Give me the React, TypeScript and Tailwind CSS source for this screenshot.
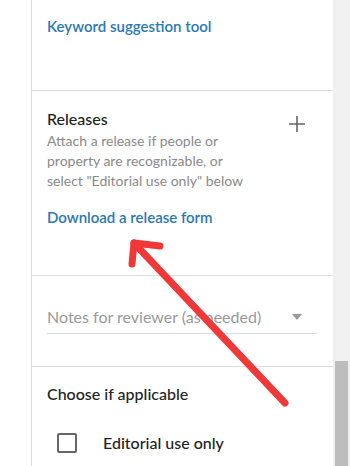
import { useState } from "react";

const App = () => {
    const [editorial, setEditorial] = useState(false);

    return (
        <div className="flex w-[350px] h-[466px] overflow-hidden bg-white font-['Lato','Liberation_Sans',sans-serif] relative">
            <div className="w-[31px] shrink-0 bg-white" />
            <div className="flex-1 border-l border-[#dcdcdc] flex flex-col">
                {/* keyword section */}
                <div className="h-[91px] shrink-0 border-b border-[#dedede] pl-[15px] pt-[14px]">
                    <a className="text-[15px] leading-[22px] font-semibold text-[#2a78b5] cursor-pointer">
                        Keyword suggestion tool
                    </a>
                </div>

                {/* releases */}
                <div className="h-[185px] shrink-0 border-b border-[#dedede] pl-[15px] pr-[27px] pt-[17px]">
                    <div className="flex justify-between items-start">
                        <div>
                            <h3 className="text-[16px] leading-[22px] font-medium text-[#222]">Releases</h3>
                            <p className="text-[14px] leading-[20px] text-[#8a8a8a] mt-[1px] w-[205px]">
                                Attach a release if people or property are recognizable, or select "Editorial use only" below
                            </p>
                        </div>
                        <svg width="16" height="16" viewBox="0 0 16 16" className="mt-[8px] mr-[1px]">
                            <path d="M8 0v16M0 8h16" stroke="#666" strokeWidth="1.6" />
                        </svg>
                    </div>
                    <a className="block mt-[15px] text-[15px] leading-[22px] font-semibold text-[#2a78b5] cursor-pointer">
                        Download a release form
                    </a>
                </div>

                {/* notes */}
                <div className="h-[91px] shrink-0 border-b border-[#dedede] pl-[15px] pr-[16px] pt-[29px]">
                    <div className="flex items-center justify-between border-b border-[#dcdcdc] h-[29px] pb-[5px] w-[270px]">
                        <span className="text-[16px] text-[#999]">Notes for reviewer (as needed)</span>
                        <svg width="10" height="6" viewBox="0 0 10 6" className="mr-[15px]">
                            <path d="M0 0h10L5 6z" fill="#999" />
                        </svg>
                    </div>
                </div>

                {/* choose */}
                <div className="pl-[15px] pt-[16px]">
                    <h3 className="text-[16px] leading-[22px] font-medium text-[#222]">Choose if applicable</h3>
                    <label className="flex items-center mt-[26px] ml-[10px] cursor-pointer" onClick={() => setEditorial(!editorial)}>
                        <span className="w-[20px] h-[20px] border-2 border-[#666] rounded-[2px] bg-white" />
                        <span className="ml-[26px] text-[16px] font-medium text-[#222]">Editorial use only</span>
                    </label>
                </div>
            </div>

            {/* scrollbar */}
            <div className="w-[17px] shrink-0 bg-[#f0f0f0] flex flex-col pt-[361px] items-center">
                <div className="w-[13px] flex-1 bg-[#bdbdbd]" />
            </div>

            {/* red annotation arrow */}
            <svg className="absolute left-0 top-0 pointer-events-none" width="350" height="466" style={{ filter: "blur(0.6px)" }}>
                <g stroke="#f03838" strokeWidth="7" strokeLinecap="round" strokeLinejoin="round" fill="none">
                    <path d="M134 243L285 403" />
                    <path d="M160 246L134 243L132 264" />
                </g>
            </svg>
        </div>
    );
};

export default App;
